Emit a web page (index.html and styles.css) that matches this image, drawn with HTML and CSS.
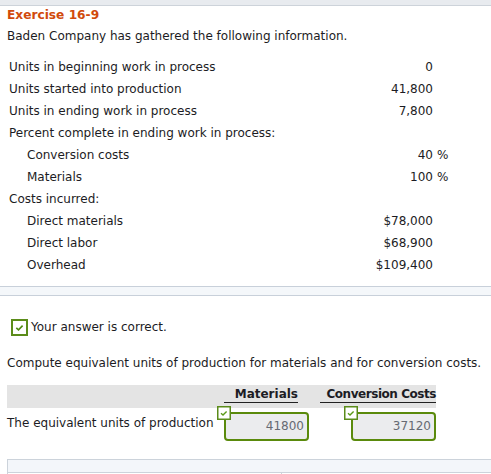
FILE: index.html
```html
<!DOCTYPE html>
<html>
<head>
<meta charset="utf-8">
<link rel="stylesheet" href="styles.css">
</head>
<body>
<div class="topbar"></div>
<section class="exercise">
  <h1 class="title">Exercise 16-9</h1>
  <p class="intro">Baden Company has gathered the following information.</p>
  <div class="data">
    <div class="lbl">Units in beginning work in process</div><div class="val">0</div><div class="unit"></div>
    <div class="lbl">Units started into production</div><div class="val">41,800</div><div class="unit"></div>
    <div class="lbl">Units in ending work in process</div><div class="val">7,800</div><div class="unit"></div>
    <div class="lbl wide">Percent complete in ending work in process:</div>
    <div class="lbl ind">Conversion costs</div><div class="val">40</div><div class="unit">%</div>
    <div class="lbl ind">Materials</div><div class="val">100</div><div class="unit">%</div>
    <div class="lbl wide">Costs incurred:</div>
    <div class="lbl ind">Direct materials</div><div class="val">$78,000</div><div class="unit"></div>
    <div class="lbl ind">Direct labor</div><div class="val">$68,900</div><div class="unit"></div>
    <div class="lbl ind">Overhead</div><div class="val">$109,400</div><div class="unit"></div>
  </div>
</section>
<div class="divider"></div>
<section class="answer">
  <div class="correct">
    <span class="chk big"><svg viewBox="0 0 17 17" width="17" height="17"><rect x="1" y="1" width="15" height="15" fill="#fff" stroke="#5b8c1a" stroke-width="2"/><path d="M5.3 8.8 L7.5 10.8 L11.6 6.6" fill="none" stroke="#4f8a10" stroke-width="1.6"/></svg></span>
    <span>Your answer is correct.</span>
  </div>
  <p class="prompt">Compute equivalent units of production for materials and for conversion costs.</p>
  <div class="grid">
    <div class="head blank"></div>
    <div class="head h1"><span>Materials</span></div>
    <div class="head h2"><span>Conversion Costs</span></div>
    <div class="rowlbl">The equivalent units of production</div>
    <div class="cell c1">
      <div class="inp">
        <span class="chk small"><svg viewBox="0 0 14 14" width="14" height="14"><rect x="0.75" y="0.75" width="12.5" height="12.5" fill="#fff" stroke="#5b8c1a" stroke-width="1.5"/><path d="M4 7.2 L6 9 L9.6 5.4" fill="none" stroke="#5b9a18" stroke-width="1.4"/></svg></span>
        41800
      </div>
    </div>
    <div class="cell c2">
      <div class="inp">
        <span class="chk small"><svg viewBox="0 0 14 14" width="14" height="14"><rect x="0.75" y="0.75" width="12.5" height="12.5" fill="#fff" stroke="#5b8c1a" stroke-width="1.5"/><path d="M4 7.2 L6 9 L9.6 5.4" fill="none" stroke="#5b9a18" stroke-width="1.4"/></svg></span>
        37120
      </div>
    </div>
  </div>
  <div class="footbox">
    <div class="fb-top"></div>
    <div class="fb-bottom"><div class="fb-l"></div><div class="fb-r"></div></div>
  </div>
</section>
</body>
</html>
```
FILE: styles.css
```css
html, body {
  margin: 0;
  padding: 0;
  background: #fff;
}
body {
  font-family: "DejaVu Sans", Verdana, sans-serif;
  font-size: 12px;
  color: #1c1c24;
  width: 491px;
  overflow: hidden;
}
.topbar {
  height: 5px;
  background: #e8ebef;
  border-bottom: 1px solid #cdd3da;
}
.exercise {
  padding: 0 0 0 7px;
}
.title {
  margin: 0;
  padding-top: 1px;
  font-size: 12.2px;
  font-weight: bold;
  color: #d14a0c;
  line-height: 17px;
}
.intro {
  margin: 0;
  padding-top: 3px;
  line-height: 18px;
}
.data {
  display: grid;
  grid-template-columns: 280px 144px 24px;
  grid-auto-rows: 22px;
  margin: 11px 0 0 2px;
  align-items: center;
}
.lbl.wide {
  grid-column: 1 / 4;
}
.lbl.ind {
  padding-left: 18px;
}
.val {
  text-align: right;
}
.unit {
  padding-left: 4px;
}
.divider {
  margin-top: 10px;
  height: 8px;
  background: #f4f7fa;
  border-top: 1px solid #c8d0da;
  border-bottom: 1px solid #c8d0da;
}
.answer {
  padding: 0 0 0 7px;
}
.correct {
  display: flex;
  align-items: center;
  gap: 3px;
  margin-top: 22px;
  padding-left: 4px;
  line-height: 18px;
}
.chk {
  display: inline-flex;
}
.prompt {
  margin: 18px 0 0;
  line-height: 18px;
}
.grid {
  display: grid;
  grid-template-columns: 210px 92px 127px;
  grid-template-rows: 23px 33px;
  margin-top: 13px;
  width: 429px;
}
.head {
  background: #e4e4e4;
  display: flex;
  align-items: flex-start;
  justify-content: flex-end;
  font-weight: bold;
  white-space: nowrap;
}
.head span {
  display: block;
  border-bottom: 1px solid #222;
  line-height: 16px;
  padding-top: 1px;
}
.h1 span { width: 74px; text-align: right; margin-right: 11px; }
.h2 span { width: 116px; text-align: right; letter-spacing: -0.45px; }
.rowlbl {
  white-space: nowrap;
  line-height: 18px;
  padding-top: 6px;
}
.cell {
  display: flex;
  justify-content: flex-end;
  align-items: flex-start;
  padding-top: 4px;
}
.inp {
  position: relative;
  box-sizing: border-box;
  width: 85px;
  height: 29px;
  border: 2px solid #5a8a0c;
  border-radius: 4px;
  background: #ebecee;
  color: #666a73;
  text-align: right;
  padding: 0 3px;
  line-height: 25px;
}
.inp .chk.small {
  position: absolute;
  left: -9px;
  top: -8px;
}
.footbox {
  margin-top: 18px;
  border: 1px solid #ccd3db;
  border-right: none;
}
.fb-top {
  height: 12px;
  background: #f3f6fa;
}
.fb-bottom {
  display: flex;
  border-top: 1px solid #ccd3db;
  height: 10px;
}
.fb-l {
  width: 273px;
  border-right: 1px solid #ccd3db;
}
```
